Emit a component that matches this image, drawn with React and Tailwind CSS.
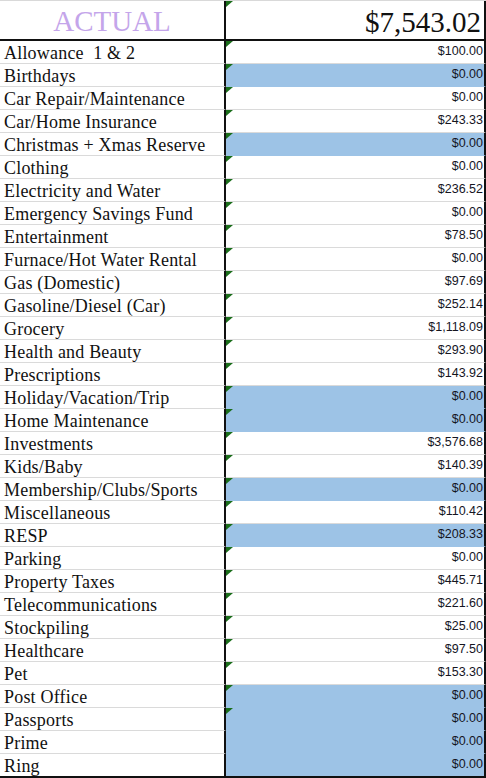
const rows = [
  ["Allowance  1 & 2", "$100.00", false, true],
  ["Birthdays", "$0.00", true, true],
  ["Car Repair/Maintenance", "$0.00", false, true],
  ["Car/Home Insurance", "$243.33", false, true],
  ["Christmas + Xmas Reserve", "$0.00", true, true],
  ["Clothing", "$0.00", false, true],
  ["Electricity and Water", "$236.52", false, true],
  ["Emergency Savings Fund", "$0.00", false, true],
  ["Entertainment", "$78.50", false, true],
  ["Furnace/Hot Water Rental", "$0.00", false, true],
  ["Gas (Domestic)", "$97.69", false, true],
  ["Gasoline/Diesel (Car)", "$252.14", false, true],
  ["Grocery", "$1,118.09", false, true],
  ["Health and Beauty", "$293.90", false, true],
  ["Prescriptions", "$143.92", false, true],
  ["Holiday/Vacation/Trip", "$0.00", true, true],
  ["Home Maintenance", "$0.00", true, true],
  ["Investments", "$3,576.68", false, true],
  ["Kids/Baby", "$140.39", false, true],
  ["Membership/Clubs/Sports", "$0.00", true, true],
  ["Miscellaneous", "$110.42", false, true],
  ["RESP", "$208.33", true, true],
  ["Parking", "$0.00", false, true],
  ["Property Taxes", "$445.71", false, true],
  ["Telecommunications", "$221.60", false, true],
  ["Stockpiling", "$25.00", false, true],
  ["Healthcare", "$97.50", false, true],
  ["Pet", "$153.30", false, true],
  ["Post Office", "$0.00", true, true],
  ["Passports", "$0.00", true, true],
  ["Prime", "$0.00", true, false],
  ["Ring", "$0.00", true, false],
]

function Flag() {
  return (
    <svg width="7" height="6" viewBox="0 0 7 6" className="absolute top-0 left-0">
      <polygon points="0,0 7,0 0,6" fill="#1b6e1b" />
    </svg>
  )
}

export default function App() {
  return (
    <div className="w-[486px] h-[778px] bg-white overflow-hidden border-t border-[#d9d9d9]">
      <div className="flex h-[40px] border-b-2 border-[#111]">
        <div className="w-[226px] border-r-2 border-[#111] flex items-center justify-center text-[29px] text-[#c4a5ea] pt-[3px]" style={{ fontFamily: '"Liberation Serif", serif' }}>
          ACTUAL
        </div>
        <div className="relative w-[260px] border-r-2 border-[#111] flex items-center justify-end pr-[3px] text-[29px] text-[#111] pt-[6px]" style={{ fontFamily: '"Liberation Serif", serif' }}>
          <Flag />
          $7,543.02
        </div>
      </div>
      {rows.map((row, i) => {
        const last = i === rows.length - 1
        return (
          <div key={row[0]} className="flex">
            <div className={`w-[226px] border-r-2 border-r-[#111] pl-[4px] text-[18px] tracking-[0.2px] leading-[24px] text-[#111] whitespace-pre ${last ? "h-[24px] border-b-2 border-b-[#111]" : "h-[23px] border-b border-b-[#dadada]"}`} style={{ fontFamily: '"Liberation Serif", serif' }}>
              {row[0]}
            </div>
            <div className={`relative w-[260px] border-r-2 border-r-[#111] flex items-end justify-end pr-[1px] pb-[2px] text-[12.5px] text-[#15151f] ${row[2] ? "bg-[#9dc3e6]" : ""} ${last ? "h-[24px] border-b-2 border-b-[#111]" : row[2] ? "h-[23px] border-b border-b-[#9dc3e6]" : "h-[23px] border-b border-b-[#dadada]"}`} style={{ fontFamily: '"Liberation Sans", Arial, sans-serif' }}>
              {row[3] && <Flag />}
              {row[1]}
            </div>
          </div>
        )
      })}
    </div>
  )
}
